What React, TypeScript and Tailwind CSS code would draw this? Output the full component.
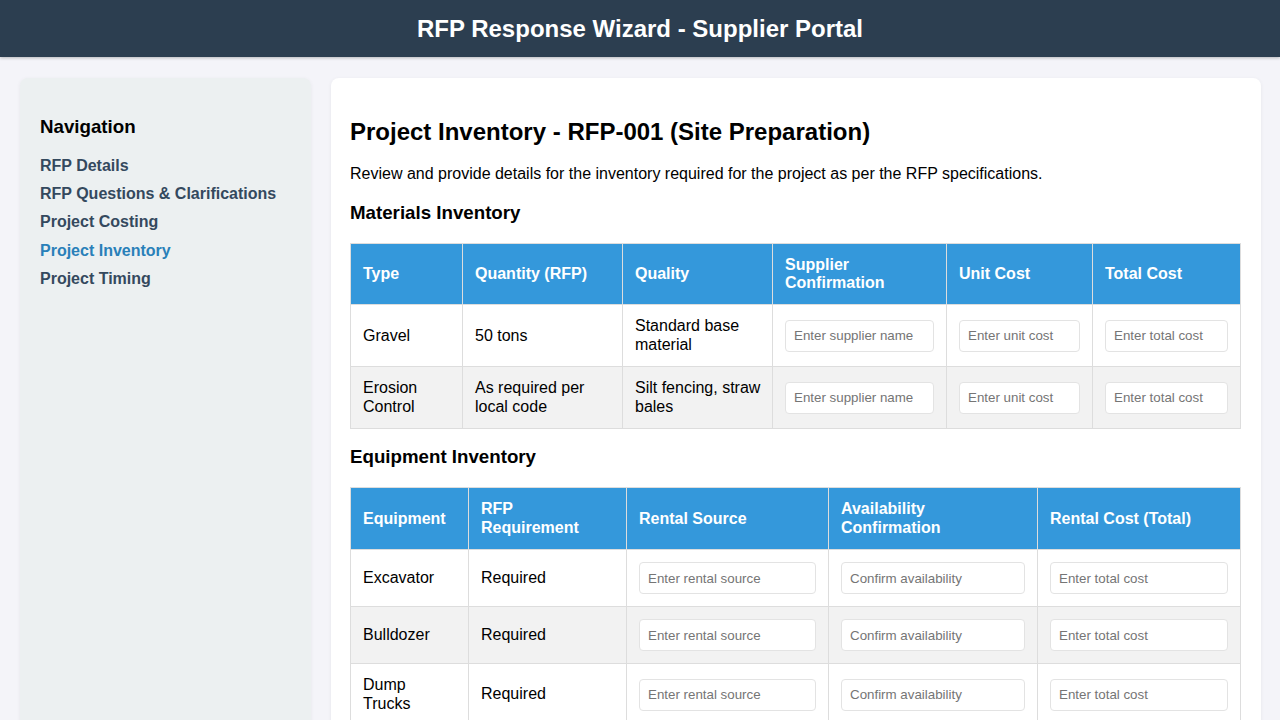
import React from "react";

const font = { fontFamily: '"Liberation Sans", Arial, sans-serif' };

function Input({ placeholder }: { placeholder: string }) {
  return (
    <input
      placeholder={placeholder}
      className="box-border block h-[32px] w-full rounded-[4px] border border-[#e3e3e3] bg-white px-[8px] text-[13.33px] text-black placeholder:text-[#757575] outline-none"
      style={font}
    />
  );
}

const th = "border border-[#dddddd] bg-[#3498db] px-[12px] py-[12px] text-left align-middle text-[16px] font-bold leading-[18.4px] text-white";
const td = "border border-[#dddddd] px-[12px] py-[12px] text-left align-middle text-[16px] leading-[18.4px] text-black";

export default function App() {
  const materials = [
    ["Gravel", "50 tons", "Standard base material"],
    ["Erosion Control", "As required per local code", "Silt fencing, straw bales"],
  ];
  const equipment = ["Excavator", "Bulldozer", "Dump Trucks"];
  const nav = ["RFP Details", "RFP Questions & Clarifications", "Project Costing", "Project Inventory", "Project Timing"];

  return (
    <div className="min-h-screen bg-[#f4f4f9]" style={font}>
      <header className="h-[57px] bg-[#2c3e50] text-center shadow-[0_1px_3px_rgba(0,0,0,0.25)]">
        <h1 className="m-0 pt-[15px] text-[24px] font-bold leading-[27.6px] text-white">
          RFP Response Wizard - Supplier Portal
        </h1>
      </header>
      <div className="flex gap-[20px] pl-[20px] pr-[20px] pt-[21px]">
        <aside className="w-[291px] shrink-0 self-stretch min-h-[700px] rounded-[8px] bg-[#ecf0f1] px-[20px] pt-[20px] shadow-[0_1px_4px_rgba(0,0,0,0.06)]">
          <h3 className="mt-[18px] mb-[19px] text-[18.72px] font-bold leading-[21.5px] text-black">Navigation</h3>
          <ul className="m-0 list-none p-0">
            {nav.map((n) => (
              <li key={n} className="mb-[10px] text-[16px] font-bold leading-[18.4px]">
                <span className={n === "Project Inventory" ? "text-[#2980b9]" : "text-[#34495e]"}>{n}</span>
              </li>
            ))}
          </ul>
        </aside>
        <main className="flex-1 rounded-[8px] bg-white pl-[19px] pr-[20px] pt-[20px] pb-[20px] shadow-[0_1px_4px_rgba(0,0,0,0.06)]">
          <h2 className="mt-[20px] mb-[19px] text-[24px] font-bold leading-[27.6px] text-black">
            Project Inventory - RFP-001 (Site Preparation)
          </h2>
          <p className="m-0 text-[16px] leading-[18.4px] text-black">
            Review and provide details for the inventory required for the project as per the RFP specifications.
          </p>
          <h3 className="mt-[19px] mb-[19px] text-[18.72px] font-bold leading-[21.5px] text-black">Materials Inventory</h3>
          <table className="w-[890px] table-fixed border-collapse">
            <colgroup>
              <col style={{ width: 112 }} />
              <col style={{ width: 160 }} />
              <col style={{ width: 150 }} />
              <col style={{ width: 174 }} />
              <col style={{ width: 146 }} />
              <col style={{ width: 148 }} />
            </colgroup>
            <thead>
              <tr>
                <th className={th}>Type</th>
                <th className={th}>Quantity (RFP)</th>
                <th className={th}>Quality</th>
                <th className={th}>Supplier Confirmation</th>
                <th className={th}>Unit Cost</th>
                <th className={th}>Total Cost</th>
              </tr>
            </thead>
            <tbody>
              {materials.map((m, i) => (
                <tr key={i} className={i % 2 === 1 ? "bg-[#f2f2f2]" : "bg-white"}>
                  <td className={td}>{m[0]}</td>
                  <td className={td}>{m[1]}</td>
                  <td className={td + " !pr-[8px]"}>{m[2]}</td>
                  <td className={td}><Input placeholder="Enter supplier name" /></td>
                  <td className={td}><Input placeholder="Enter unit cost" /></td>
                  <td className={td}><Input placeholder="Enter total cost" /></td>
                </tr>
              ))}
            </tbody>
          </table>
          <h3 className="mt-[17px] mb-[20px] text-[18.72px] font-bold leading-[21.5px] text-black">Equipment Inventory</h3>
          <table className="w-[890px] table-fixed border-collapse">
            <colgroup>
              <col style={{ width: 118 }} />
              <col style={{ width: 158 }} />
              <col style={{ width: 202 }} />
              <col style={{ width: 209 }} />
              <col style={{ width: 203 }} />
            </colgroup>
            <thead>
              <tr>
                <th className={th}>Equipment</th>
                <th className={th}>RFP Requirement</th>
                <th className={th}>Rental Source</th>
                <th className={th}>Availability Confirmation</th>
                <th className={th}>Rental Cost (Total)</th>
              </tr>
            </thead>
            <tbody>
              {equipment.map((e, i) => (
                <tr key={e} className={i % 2 === 1 ? "bg-[#f2f2f2]" : "bg-white"}>
                  <td className={td}>{e === "Dump Trucks" ? <>Dump<br />Trucks</> : e}</td>
                  <td className={td}>Required</td>
                  <td className={td}><Input placeholder="Enter rental source" /></td>
                  <td className={td}><Input placeholder="Confirm availability" /></td>
                  <td className={td}><Input placeholder="Enter total cost" /></td>
                </tr>
              ))}
            </tbody>
          </table>
        </main>
      </div>
    </div>
  );
}
